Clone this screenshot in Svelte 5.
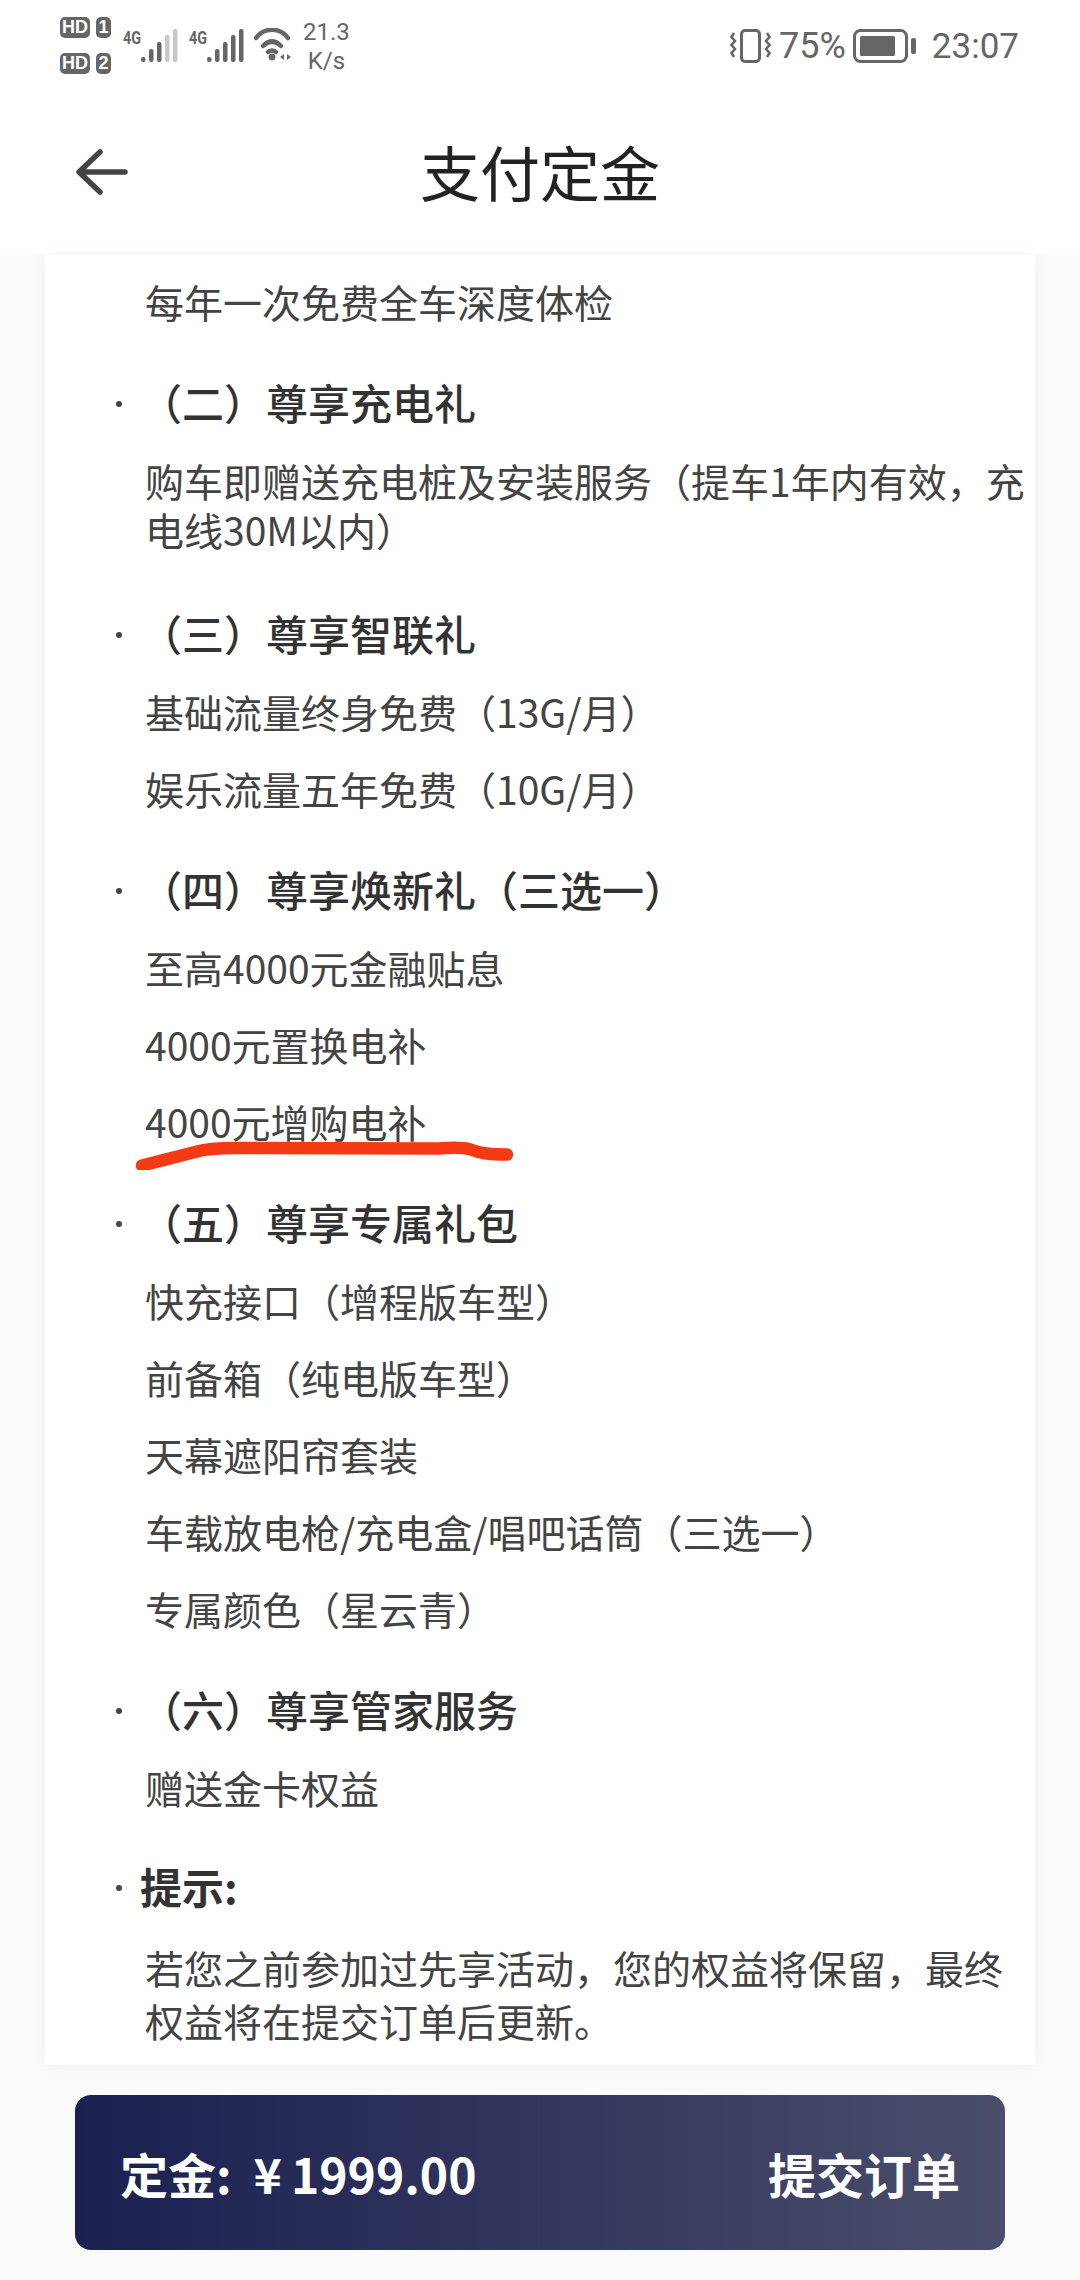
<script>
	const sections = [
		{ items: ['每年一次免费全车深度体检'] },
		{ title: '（二）尊享充电礼', items: ['购车即赠送充电桩及安装服务（提车1年内有效，充电线30M以内）'] },
		{ title: '（三）尊享智联礼', items: ['基础流量终身免费（13G/月）', '娱乐流量五年免费（10G/月）'] },
		{ title: '（四）尊享焕新礼（三选一）', items: ['至高4000元金融贴息', '4000元置换电补', '4000元增购电补'], marked: 2 },
		{
			title: '（五）尊享专属礼包',
			items: ['快充接口（增程版车型）', '前备箱（纯电版车型）', '天幕遮阳帘套装', '车载放电枪/充电盒/唱吧话筒（三选一）', '专属颜色（星云青）']
		},
		{ title: '（六）尊享管家服务', items: ['赠送金卡权益'] },
		{ title: '提示:', tip: true, items: ['若您之前参加过先享活动，您的权益将保留，最终权益将在提交订单后更新。'] }
	];
	const bars = [
		[0, 56, 5],
		[8, 48, 13],
		[16, 41, 20],
		[24, 34, 27],
		[32, 28, 33]
	];
</script>

{#snippet signal(weak)}
	<span class="net">4G</span>
	<svg class="bars" width="37" height="34" viewBox="0 27 37 34">
		{#each bars as [x, y, h], i}
			<rect {x} {y} width="4.500" height={h} rx="2" fill={weak && i > 2 ? '#c8c8c8' : '#666'} />
		{/each}
	</svg>
{/snippet}

<div class="page">
	<header>
		<div class="status">
			<div class="status-left">
				<div class="sims">
					<div class="sim"><span class="hd">HD</span><span class="slot">1</span></div>
					<div class="sim"><span class="hd">HD</span><span class="slot">2</span></div>
				</div>
				{@render signal(true)}
				<span class="spacer"></span>
				{@render signal(false)}
				<svg class="wifi" width="40" height="34" viewBox="0 0 40 34" fill="none" stroke="#666" stroke-width="4.500" stroke-linecap="round">
					<path d="M2 10C10 -1 26 -1 34 10" />
					<path d="M9 18Q18 9 27 18" />
					<path d="M14 24Q18 21 22 24" />
					<circle cx="18" cy="29" r="3.500" fill="#666" stroke="none" />
					<path d="M30 26L26 29L30 32ZM33 26L37 29L33 32Z" fill="#666" stroke="none" />
				</svg>
				<div class="speed"><span>21.3</span><span>K/s</span></div>
			</div>
			<div class="status-right">
				<svg width="41" height="34" viewBox="0 0 41 34" fill="none" stroke="#666">
					<rect x="11.500" y="1.500" width="18" height="31" rx="3.500" stroke-width="3" />
					<path d="M4 4L1.500 8L5 12L1.500 16L5 20L1.500 24L4 28M37 4L39.500 8L36 12L39.500 16L36 20L39.500 24L37 28" stroke-width="2.500" />
				</svg>
				<span class="pct">75%</span>
				<svg class="batt" width="64" height="34" viewBox="0 0 64 34">
					<rect x="1.500" y="1.500" width="52" height="31" rx="6" fill="none" stroke="#666" stroke-width="3" />
					<rect x="7" y="7" width="35" height="20" rx="1.500" fill="#666" />
					<rect x="58" y="9" width="5" height="16" rx="2" fill="#666" />
				</svg>
				<span class="time">23:07</span>
			</div>
		</div>
		<nav>
			<svg class="back" width="54" height="46" viewBox="0 0 54 46" fill="none" stroke="#444" stroke-width="5.500" stroke-linecap="round" stroke-linejoin="round">
				<path d="M25 3L4 23L25 43M9 23H50" />
			</svg>
			<h1>支付定金</h1>
		</nav>
	</header>

	<main>
		{#each sections as section}
			<section class:tip={section.tip}>
				{#if section.title}
					<h2><i></i>{section.title}</h2>
				{/if}
				{#each section.items as item, i}
					<p>
						{item}
						{#if section.marked === i}
							<svg class="scribble" width="380" height="34" viewBox="0 0 380 34" fill="none">
								<path d="M7 29.500L60 16C70 13 80 12 100 12L298 12.500C312 12.500 322 10 334 13C345 17 352 18.500 372 18.500" stroke="#f43a15" stroke-width="12.500" stroke-linecap="round" stroke-linejoin="round" />
							</svg>
						{/if}
					</p>
				{/each}
			</section>
		{/each}
	</main>

	<footer>
		<button>
			<span class="amount">定金:<b>¥</b>1999.00</span>
			<span class="submit">提交订单</span>
		</button>
	</footer>
</div>

<style>
	:global(body) {
		background: #fafafa;
	}
	.page {
		width: 1080px;
		height: 2280px;
		display: flex;
		flex-direction: column;
		overflow: hidden;
		font-family: 'Noto Sans CJK SC', 'Noto Sans', sans-serif;
		color: #333;
	}
	header {
		background: #fff;
		height: 255px;
		flex: none;
	}
	.status {
		height: 90px;
		padding: 16px 38px 0 60px;
		box-sizing: border-box;
		display: flex;
		justify-content: space-between;
		font-family: Roboto, sans-serif;
		color: #666;
	}
	.status-left {
		display: flex;
		align-items: flex-start;
	}
	.sims {
		display: flex;
		flex-direction: column;
		gap: 15px;
		margin-top: 1px;
		width: 63px;
	}
	.sim {
		display: flex;
		gap: 6px;
	}
	.hd,
	.slot {
		height: 21px;
		line-height: 21px;
		background: #666;
		color: #fff;
		border-radius: 5px;
		font-size: 18px;
		font-weight: 700;
		text-align: center;
		font-family: 'Liberation Sans', sans-serif;
	}
	.hd {
		width: 30px;
	}
	.slot {
		width: 15px;
	}
	.net {
		font-size: 18px;
		font-weight: 700;
		line-height: 15px;
		margin-top: 14px;
		width: 18px;
		transform: scaleX(0.8);
		transform-origin: left;
	}
	.bars {
		margin-top: 12px;
	}
	.spacer {
		width: 11px;
	}
	.wifi {
		margin: 12px 0 0 10px;
	}
	.speed {
		display: flex;
		flex-direction: column;
		align-items: center;
		margin: 2px 0 0 9px;
		font-size: 24px;
		line-height: 29px;
	}
	.status-right {
		display: flex;
		align-items: center;
		height: 34px;
		margin-top: 13px;
	}
	.pct,
	.time {
		font-size: 35px;
	}
	.pct {
		font-size: 36px;
		margin: 0 7px 0 8px;
	}
	.time {
		margin-left: 15px;
		margin-right: 23px;
	}
	nav {
		position: relative;
		height: 165px;
		display: flex;
		align-items: center;
		justify-content: center;
	}
	.back {
		position: absolute;
		left: 75px;
		top: 59px;
	}
	h1 {
		margin: 0 0 4px;
		font-size: 60px;
		font-weight: 400;
		line-height: 70px;
		color: #222;
	}
	main {
		flex: 1;
		min-height: 0;
		margin: 0 45px;
		padding: 22px 5px 0 100px;
		background: #fff;
		box-shadow: 0 0 12px rgba(0, 0, 0, 0.05);
		overflow: hidden;
	}
	section + section {
		margin-top: 49px;
	}
	section:nth-child(2) {
		margin-bottom: 52px;
	}
	section.tip {
		margin-top: 47px;
	}
	h2 {
		position: relative;
		margin: 0 0 -1px -5px;
		font-size: 42px;
		font-weight: 500;
		line-height: 54px;
		color: #333;
	}
	h2 i {
		position: absolute;
		left: -24px;
		top: 26px;
		width: 6px;
		height: 6px;
		border-radius: 50%;
		background: #444;
	}
	.tip h2 {
		font-weight: 700;
	}
	p {
		position: relative;
		margin: 0;
		font-size: 39px;
		line-height: 49px;
		color: #444;
	}
	h2 + p {
		margin-top: 28px;
	}
	p + p {
		margin-top: 28px;
	}
	.tip p {
		line-height: 53px;
		margin-top: 29px;
	}
	.scribble {
		position: absolute;
		left: -10px;
		top: 39px;
	}
	footer {
		flex: none;
		height: 215px;
		padding: 30px 75px 0;
		box-sizing: border-box;
	}
	button {
		width: 100%;
		height: 155px;
		padding: 0 45px;
		border: 0;
		border-radius: 16px;
		display: flex;
		align-items: center;
		justify-content: space-between;
		background: linear-gradient(90deg, #1a2050, #4b4d6b);
		color: #fff;
		font-family: inherit;
		font-weight: 700;
		font-size: 48px;
	}
	.amount b {
		font-weight: 700;
		margin: 0 9px 0 22px;
	}
</style>
